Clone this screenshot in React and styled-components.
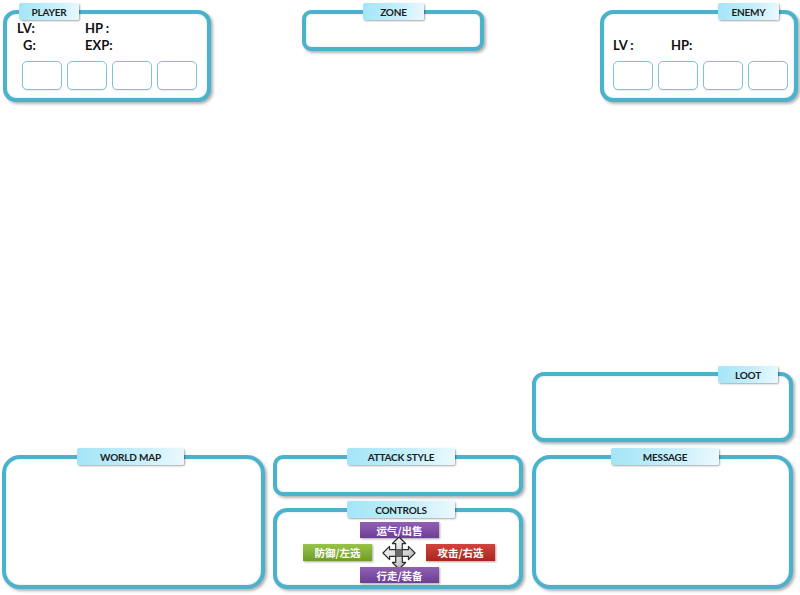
import React from 'react'
import styled, { createGlobalStyle } from 'styled-components'

const Global = createGlobalStyle`
  html, body { margin: 0; padding: 0; background: #fff; }
  body { font-family: Lato, "Open Sans", "Noto Sans CJK SC", sans-serif; }
`

const Screen = styled.div`
  width: 800px;
  height: 595px;
  display: flex;
  flex-direction: column;
  box-sizing: border-box;
  padding-bottom: 6px;
  overflow: hidden;
`

const TopRow = styled.div`
  display: flex;
  align-items: flex-start;
  margin-top: 10px;
`

const BottomRow = styled.div`
  margin-top: auto;
  display: flex;
  align-items: flex-end;
  padding-left: 2px;
  gap: 8px;
`

const Column = styled.div`
  display: flex;
  flex-direction: column;
  gap: ${p => p.$gap}px;
  margin-left: ${p => p.$ml || 0}px;
`

const Panel = styled.section`
  position: relative;
  box-sizing: border-box;
  width: ${p => p.$w}px;
  height: ${p => p.$h}px;
  margin-left: ${p => p.$ml || 0}px;
  border: 4px solid #4bb2cd;
  border-radius: ${p => p.$r || 14}px;
  background: #fff;
  box-shadow: 2px 2px 3px rgba(0, 0, 0, 0.3), inset 0 0 2px rgba(40, 130, 160, 0.3);
`

const Tab = styled.div`
  position: absolute;
  top: -${p => (p.$top || 7) + 4}px;
  ${p => (p.$right != null ? `right: ${p.$right}px;` : `left: ${p.$left}px;`)}
  width: ${p => p.$w}px;
  height: 17px;
  box-sizing: border-box;
  display: flex;
  align-items: center;
  justify-content: center;
  background: linear-gradient(100deg, #a3e5f8 0%, #c4eefb 55%, #ecf9fe 100%);
  border-radius: 2px;
  box-shadow: 1px 1px 2px rgba(0, 0, 0, 0.35);
  font-size: 10px;
  font-weight: 700;
  color: #1c1c1c;
  letter-spacing: -0.2px;
`

const Stats = styled.div`
  display: grid;
  grid-template-columns: ${p => p.$cols};
  grid-auto-rows: 17px;
  padding: ${p => p.$pad};
  font-size: 13px;
  font-weight: 700;
  color: #111;
  line-height: 17px;
`

const Stat = styled.span`
  padding-left: ${p => p.$indent || 0}px;
`

const Slots = styled.div`
  display: flex;
  gap: 5px;
  padding-left: ${p => p.$pl}px;
  margin-top: ${p => p.$mt}px;
`

const Slot = styled.div`
  width: 40px;
  height: 29px;
  box-sizing: border-box;
  border: 1.5px solid #7fc3d4;
  border-radius: 5px;
  background: #fff;
  box-shadow: 0 1px 1px rgba(0, 0, 0, 0.08);
`

const Pad = styled.div`
  display: flex;
  flex-direction: column;
  align-items: center;
  padding-top: 10px;
  gap: 6px;
`

const PadRow = styled.div`
  display: flex;
  align-items: center;
  height: 17px;
  gap: 9px;
  margin-left: 2px;
`

const CrossBox = styled.div`
  width: 36px;
  height: 17px;
  display: flex;
  align-items: center;
  justify-content: center;
  overflow: visible;
`

const KEY_COLORS = {
  purple: ['#9060b4', '#6c3f92'],
  green: ['#97c447', '#6e9c27'],
  red: ['#d2443d', '#a8271f'],
}

const Key = styled.div`
  width: ${p => p.$w}px;
  height: ${p => p.$h || 17}px;
  flex-shrink: 0;
  display: flex;
  align-items: center;
  justify-content: center;
  background: linear-gradient(
    to bottom,
    ${p => KEY_COLORS[p.$c][0]},
    ${p => KEY_COLORS[p.$c][1]}
  );
  color: #fff;
  font-family: "Noto Sans CJK SC", sans-serif;
  font-size: 10.5px;
  font-weight: 700;
  box-shadow: 1px 1px 2px rgba(0, 0, 0, 0.35);
  margin-left: ${p => p.$ml || 0}px;
`

const Cross = () => (
  <svg width="36" height="34" viewBox="0 0 36 36" style={{ flexShrink: 0 }}>
    <defs>
      <linearGradient id="cg" x1="0" y1="0" x2="1" y2="1">
        <stop offset="0" stopColor="#ffffff" />
        <stop offset="0.6" stopColor="#d6d6d6" />
        <stop offset="1" stopColor="#9a9a9a" />
      </linearGradient>
    </defs>
    <path
      d="M18 1 L25 8 L21.5 8 L21.5 14.5 L28 14.5 L28 11 L35 18 L28 25 L28 21.5 L21.5 21.5 L21.5 28 L25 28 L18 35 L11 28 L14.5 28 L14.5 21.5 L8 21.5 L8 25 L1 18 L8 11 L8 14.5 L14.5 14.5 L14.5 8 L11 8 Z"
      fill="url(#cg)"
      stroke="#2e2e2e"
      strokeWidth="1.3"
      strokeLinejoin="round"
    />
    <rect x="14.5" y="14.5" width="7" height="7" fill="#6b6b6b" stroke="#333" strokeWidth="0.8" />
  </svg>
)

export default function App() {
  return (
    <>
      <Global />
      <Screen>
        <TopRow>
          <Panel $w={208} $h={92} $r={13} $ml={3}>
            <Tab $left={12} $w={60}>PLAYER</Tab>
            <Stats $cols="68px 1fr" $pad="6px 0 0 10px">
              <Stat>LV:</Stat>
              <Stat>HP :</Stat>
              <Stat $indent={6}>G:</Stat>
              <Stat>EXP:</Stat>
            </Stats>
            <Slots $pl={15} $mt={7}>
              <Slot /><Slot /><Slot /><Slot />
            </Slots>
          </Panel>
          <Panel $w={182} $h={41} $r={9} $ml={91}>
            <Tab $left={57} $w={61}>ZONE</Tab>
          </Panel>
          <Panel $w={198} $h={92} $r={13} $ml={116}>
            <Tab $right={15} $w={61}>ENEMY</Tab>
            <Stats $cols="58px 1fr" $pad="23px 0 0 9px">
              <Stat>LV :</Stat>
              <Stat>HP:</Stat>
            </Stats>
            <Slots $pl={9} $mt={7}>
              <Slot /><Slot /><Slot /><Slot />
            </Slots>
          </Panel>
        </TopRow>

        <BottomRow>
          <Panel $w={263} $h={134} $r={18}>
            <Tab $left={71} $w={107}>WORLD MAP</Tab>
          </Panel>
          <Column $gap={12}>
            <Panel $w={250} $h={41} $r={10}>
              <Tab $left={70} $w={108}>ATTACK STYLE</Tab>
            </Panel>
            <Panel $w={250} $h={81} $r={14}>
              <Tab $left={70} $w={108}>CONTROLS</Tab>
              <Pad>
                <Key $c="purple" $w={79} $h={16} $ml={3}>运气/出售</Key>
                <PadRow>
                  <Key $c="green" $w={69}>防御/左选</Key>
                  <CrossBox><Cross /></CrossBox>
                  <Key $c="red" $w={69}>攻击/右选</Key>
                </PadRow>
                <Key $c="purple" $w={79} $h={16} $ml={3}>行走/装备</Key>
              </Pad>
            </Panel>
          </Column>
          <Column $gap={13} $ml={1}>
            <Panel $w={261} $h={70} $r={12}>
              <Tab $right={11} $w={60} $top={6}>LOOT</Tab>
            </Panel>
            <Panel $w={261} $h={134} $r={18}>
              <Tab $left={75} $w={108}>MESSAGE</Tab>
            </Panel>
          </Column>
        </BottomRow>
      </Screen>
    </>
  )
}
